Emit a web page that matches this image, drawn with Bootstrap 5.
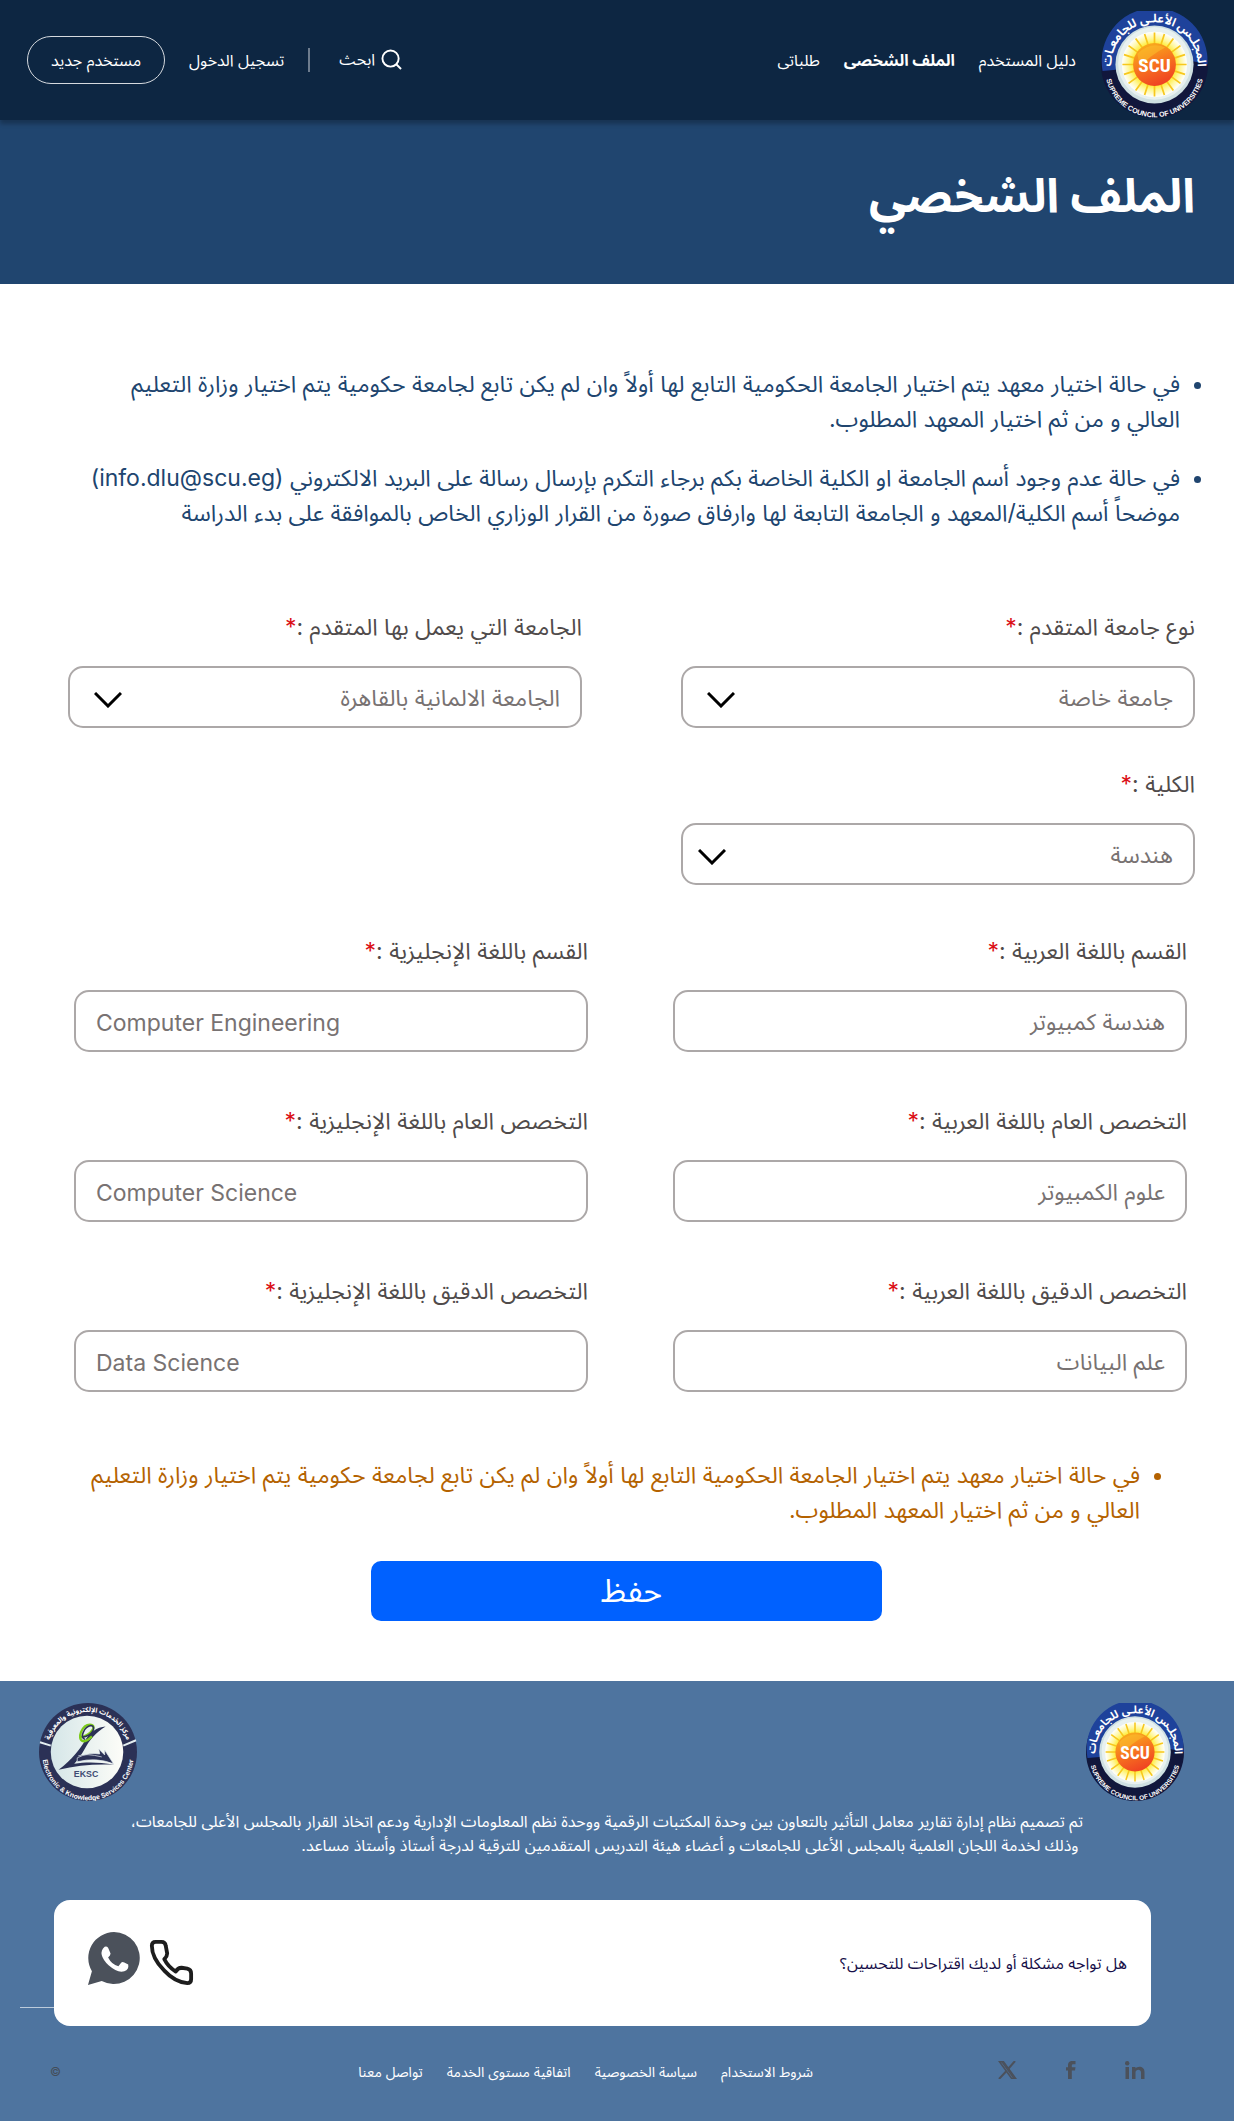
<!DOCTYPE html>
<html lang="ar" dir="rtl">
<head>
<meta charset="utf-8">
<meta name="viewport" content="width=device-width, initial-scale=1">
<title>الملف الشخصي</title>
<link href="https://cdn.jsdelivr.net/npm/bootstrap@5.3.0/dist/css/bootstrap.min.css" rel="stylesheet">
<style>
  body { font-family: Inter, "Noto Sans Arabic", "Noto Sans", "DejaVu Sans", sans-serif; font-size: 16px; line-height: 24px; color: #504b4b; }
  .site-header { background: #0d2642; min-height: 120px; padding: 0 25px 0 27px; box-shadow: 0 4px 4px rgba(0, 0, 0, .25); z-index: 2; }
  .site-header a { color: #fff; text-decoration: none; }
  .main-links { padding-right: 24px; gap: 24px; }
  .user-links { gap: 24px; }
  .find-btn { color: #fff; gap: 6px; padding: 0 6px 2px 4px; }
  .split-line { width: 2px; height: 24px; background: #6d7c8e; }
  .btn-register { border: 1px solid #d5d9de; border-radius: 24px; height: 48px; width: 138px; }
  .hero { background: #20456f; height: 164px; padding: 0 39px 14px; }
  .hero h1 { color: #fff; font-size: 47px; line-height: 64px; font-weight: 700; }
  .notes { font-size: 23px; line-height: 35px; color: #20456f; padding: 0 54px 0 0; margin: 0; }
  .notes li + li { margin-top: 24px; }
  .top-notes { padding: 83px 0 0 80px; }
  .end-notes { color: #b46200; padding: 0 94px 0 80px; margin-top: 66px; }
  .pair-a { --bs-gutter-x: 99px; --bs-gutter-y: 39px; }
  .pair-b { --bs-gutter-x: 85px; --bs-gutter-y: 52px; }
  .block-a { padding: 79px 39px 0 68px; }
  .block-b { padding: 49px 47px 0 74px; }
  .form-label { display: block; font-size: 23px; line-height: 35px; margin: 0 0 21px; color: #504b4b; }
  .req { color: #db0f16; }
  .field-box { height: 62px; border: 2px solid #aca8a8; border-radius: 15px; padding: 3px 20px 0; font-size: 23px; line-height: 35px; color: #787272; }
  select.field-box { padding: 3px 20px 0 64px; background-position: left 24px top 24px; background-size: 28px 16px; background-image: url("data:image/svg+xml,%3Csvg xmlns='http://www.w3.org/2000/svg' viewBox='0 0 28 16'%3E%3Cpath d='M1 1l13 13L27 1' fill='none' stroke='%23000' stroke-width='3'/%3E%3C/svg%3E"); }
  select.narrow-arrow { background-position: left 15px top 24px; }
  .btn-save { width: 511px; max-width: 100%; height: 60px; background: #0061ff; color: #fff; border: 0; border-radius: 10px; padding: 0 0 0 10px; font-size: 32px; line-height: 40px; }
  .save-row { padding: 33px 0 60px 371px; }
  .site-footer { background: #4e749f; color: #fff; padding-bottom: 5px; }
  .logo-row { padding: 22px 50px 0 39px; }
  .about { padding: 8px 151px 0 0; }
  .about p { margin: 0; }
  .help-wrap { margin-top: 43px; padding: 0 83px 0 54px; position: relative; }
  .help-wrap::before { content: ""; position: absolute; left: 20px; width: 60px; bottom: 18px; border-top: 1px solid #bccbdb; }
  .help-card { background: #fff; color: #170f49; border-radius: 16px; height: 126px; padding: 0 24px 0 33px; position: relative; }
  .contact-icons { padding-bottom: 10px; }
  .bottom-row { padding: 0 89px 2px 50px; height: 90px; }
  .legal { gap: 24px; font-size: 14px; margin-right: 185px; padding-top: 3px; }
  .legal a { color: #fff; text-decoration: none; }
  .social { width: 147px; }
  .copy { color: #444d58; font-size: 12px; margin-right: auto; padding-top: 3px; }
</style>
</head>
<body>
<svg width="0" height="0" class="position-absolute" aria-hidden="true">
  <defs>
    <linearGradient id="orb" x1="0.2" y1="0" x2="0.6" y2="1"><stop offset="0" stop-color="#f9b21c"/><stop offset=".5" stop-color="#f7761f"/><stop offset="1" stop-color="#ef4123"/></linearGradient>
    <radialGradient id="glow"><stop offset=".55" stop-color="#ffe600"/><stop offset=".8" stop-color="#fff79a"/><stop offset="1" stop-color="#fff"/></radialGradient>
    <linearGradient id="disc"><stop offset="0" stop-color="#d5e6e8"/><stop offset="1" stop-color="#fdfdf8"/></linearGradient>
    <path id="scuTop" d="M11 62A40.500 40.500 0 1 1 89 62"/>
    <path id="scuLow" d="M4 46A46.500 46.500 0 1 0 96 46"/>
    <path id="ekTop" d="M9 50A41 41 0 0 1 91 50"/>
    <path id="ekLow" d="M4 46A46.500 46.500 0 1 0 96 46"/>
    <symbol id="scu" viewBox="0 0 100 100">
      <circle cx="50" cy="50" r="50" fill="#11173c"/>
      <path d="M1.500 56A49.500 49.500 0 1 1 99.500 50L86 47 14 55Z" fill="#1e429b"/>
      <circle cx="50" cy="50" r="36.500" fill="#cfe0e2"/>
      <circle cx="50" cy="49" r="34" fill="#e8f1f0"/>
      <circle cx="50" cy="50" r="30.500" fill="url(#glow)"/>
      <g stroke="#f8c81c" stroke-width="1.600">
        <path id="ray" d="M50 20V80M20 50H80"/>
        <use href="#ray" transform="rotate(18 50 50)"/><use href="#ray" transform="rotate(36 50 50)"/><use href="#ray" transform="rotate(54 50 50)"/><use href="#ray" transform="rotate(72 50 50)"/>
      </g>
      <circle cx="50" cy="50" r="20" fill="url(#orb)"/>
      <path d="M34 40Q46 28 60 34Q48 40 36 52Z" fill="#fbc02d" opacity=".55"/>
      <text x="50" y="57" direction="ltr" text-anchor="middle" font-family="Liberation Sans Narrow, Roboto Condensed, Liberation Sans, sans-serif" font-size="18" font-weight="700" fill="#fff">SCU</text>
      <text direction="ltr" font-family="Liberation Sans, sans-serif" font-size="6.600" font-weight="700" fill="#fff"><textPath href="#scuLow" startOffset="50%" text-anchor="middle">SUPREME COUNCIL OF UNIVERSITIES</textPath></text>
      <text font-family="Noto Sans Arabic, DejaVu Sans" font-size="11" font-weight="700" fill="#fff" direction="rtl"><textPath href="#scuTop" startOffset="50%" text-anchor="middle">المجلـس الأعلـى للجامعـات</textPath></text>
    </symbol>
    <symbol id="eksc" viewBox="0 0 100 100">
      <circle cx="50" cy="50" r="50" fill="#2b3156"/>
      <circle cx="49" cy="50" r="37" fill="url(#disc)"/>
      <path d="M1 40L12 43.500M99 38L86 43.500" stroke="#e4eef0" stroke-width="2"/>
      <path d="M20 68C34 58 42 46 46 40C52 29 59 25 68 24C58 30 52 37 46 48C42 55 38 60 36 62C48 60 60 60 77 63C56 62 38 64 20 68Z" fill="#2b3156"/>
      <path d="M39 56Q50 50 62 52L61 47L67 53V48L76 62Q58 55 39 60ZM40 54Q48 51 64 55" fill="#2b3156" stroke="#e4eef0" stroke-width=".7"/>
      <path d="M42 35C54 33 60 22 52 22C44 22 38 37 45 39C49 39 52 36 54 34" fill="none" stroke="#7ccb1b" stroke-width="2.400"/>
      <path d="M44 35C55 33 59 24 53 23C46 24 41 36 47 37" fill="none" stroke="#2b3156" stroke-width="1.600"/>
      <text x="48" y="76" direction="ltr" text-anchor="middle" font-family="Liberation Sans, sans-serif" font-size="9" font-weight="700" fill="#3e4b73">EKSC</text>
      <text direction="ltr" font-family="Liberation Sans, sans-serif" font-size="7" font-weight="700" fill="#fff"><textPath href="#ekLow" startOffset="50%" text-anchor="middle">Electronic &amp; Knowledge Services Center</textPath></text>
      <text font-family="Noto Sans Arabic, DejaVu Sans" font-size="7" font-weight="700" fill="#fff" direction="rtl"><textPath href="#ekTop" startOffset="50%" text-anchor="middle">مركز الخدمات الإلكترونية والمعرفية</textPath></text>
    </symbol>
  </defs>
</svg>

<header class="site-header d-flex align-items-center justify-content-between position-relative">
  <nav class="d-flex align-items-center" aria-label="القائمة الرئيسية">
    <a href="#" class="pt-2" aria-label="المجلس الأعلى للجامعات"><svg class="d-block" width="109" height="107"><use href="#scu"/></svg></a>
    <div class="main-links d-flex">
      <a href="#">دليل المستخدم</a>
      <a href="#" class="fw-bold" aria-current="page">الملف الشخصى</a>
      <a href="#">طلباتى</a>
    </div>
  </nav>
  <div class="user-links d-flex align-items-center">
    <button type="button" class="find-btn btn d-flex align-items-center">
      <svg width="21" height="21" viewBox="0 0 22 22" fill="none" stroke="#fff" stroke-width="2"><circle cx="10" cy="10" r="8.500"/><path d="M16 16l5 5"/></svg>
      <span>ابحث</span>
    </button>
    <span class="split-line"></span>
    <a href="#">تسجيل الدخول</a>
    <a href="#" class="btn-register d-flex align-items-center justify-content-center">مستخدم جديد</a>
  </div>
</header>

<section class="hero d-flex align-items-center"><h1 class="m-0">الملف الشخصي</h1></section>

<main>
  <div class="top-notes">
    <ul class="notes">
      <li>في حالة اختيار معهد يتم اختيار الجامعة الحكومية التابع لها أولاً وان لم يكن تابع لجامعة حكومية يتم اختيار وزارة التعليم<br>العالي و من ثم اختيار المعهد المطلوب.</li>
      <li>في حالة عدم وجود أسم الجامعة او الكلية الخاصة بكم برجاء التكرم بإرسال رسالة على البريد الالكتروني (info.dlu@scu.eg)<br>موضحاً أسم الكلية/المعهد و الجامعة التابعة لها وارفاق صورة من القرار الوزاري الخاص بالموافقة على بدء الدراسة</li>
    </ul>
  </div>
  <form>
    <div class="block-a">
      <div class="row pair-a">
        <div class="col-6">
          <label class="form-label" for="uniType">نوع جامعة المتقدم :<span class="req">*</span></label>
          <select class="form-select field-box" id="uniType"><option>جامعة خاصة</option></select>
        </div>
        <div class="col-6">
          <label class="form-label" for="uni">الجامعة التي يعمل بها المتقدم :<span class="req">*</span></label>
          <select class="form-select field-box" id="uni"><option>الجامعة الالمانية بالقاهرة</option></select>
        </div>
        <div class="col-6">
          <label class="form-label" for="faculty">الكلية :<span class="req">*</span></label>
          <select class="form-select field-box narrow-arrow" id="faculty"><option>هندسة</option></select>
        </div>
      </div>
    </div>
    <div class="block-b">
      <div class="row pair-b">
        <div class="col-6">
          <label class="form-label" for="depAr">القسم باللغة العربية :<span class="req">*</span></label>
          <input class="form-control field-box" id="depAr" type="text" value="هندسة كمبيوتر">
        </div>
        <div class="col-6">
          <label class="form-label" for="depEn">القسم باللغة الإنجليزية :<span class="req">*</span></label>
          <input class="form-control field-box" id="depEn" type="text" dir="ltr" value="Computer Engineering">
        </div>
        <div class="col-6">
          <label class="form-label" for="majAr">التخصص العام باللغة العربية :<span class="req">*</span></label>
          <input class="form-control field-box" id="majAr" type="text" value="علوم الكمبيوتر">
        </div>
        <div class="col-6">
          <label class="form-label" for="majEn">التخصص العام باللغة الإنجليزية :<span class="req">*</span></label>
          <input class="form-control field-box" id="majEn" type="text" dir="ltr" value="Computer Science">
        </div>
        <div class="col-6">
          <label class="form-label" for="minAr">التخصص الدقيق باللغة العربية :<span class="req">*</span></label>
          <input class="form-control field-box" id="minAr" type="text" value="علم البيانات">
        </div>
        <div class="col-6">
          <label class="form-label" for="minEn">التخصص الدقيق باللغة الإنجليزية :<span class="req">*</span></label>
          <input class="form-control field-box" id="minEn" type="text" dir="ltr" value="Data Science">
        </div>
      </div>
    </div>
    <ul class="notes end-notes">
      <li>في حالة اختيار معهد يتم اختيار الجامعة الحكومية التابع لها أولاً وان لم يكن تابع لجامعة حكومية يتم اختيار وزارة التعليم<br>العالي و من ثم اختيار المعهد المطلوب.</li>
    </ul>
    <div class="save-row d-flex justify-content-end">
      <button class="btn-save" type="submit">حفظ</button>
    </div>
  </form>
</main>

<footer class="site-footer">
  <div class="logo-row d-flex justify-content-between">
    <svg width="98" height="98" role="img" aria-label="SCU"><use href="#scu"/></svg>
    <svg width="98" height="98" role="img" aria-label="EKSC"><use href="#eksc"/></svg>
  </div>
  <div class="about">
    <p>تم تصميم نظام إدارة تقارير معامل التأثير بالتعاون بين وحدة المكتبات الرقمية ووحدة نظم المعلومات الإدارية ودعم اتخاذ القرار بالمجلس الأعلى للجامعات،</p>
    <p>&nbsp;وذلك لخدمة اللجان العلمية بالمجلس الأعلى للجامعات و أعضاء هيئة التدريس المتقدمين للترقية لدرجة أستاذ وأستاذ مساعد.</p>
  </div>
  <div class="help-wrap">
    <div class="help-card d-flex align-items-center justify-content-between">
      <span>هل تواجه مشكلة أو لديك اقتراحات للتحسين؟</span>
      <div class="contact-icons d-flex align-items-center gap-2">
        <a href="#" class="pt-2" aria-label="اتصال"><svg class="d-block" width="46" height="46" viewBox="0 0 48 48" fill="none" stroke="#1d1d1d" stroke-width="4" stroke-linejoin="round"><path d="M4 7Q4 3 8 3H14Q18 3 18.500 7L20 15Q20 18 17 21Q21 29 29 34Q31 30 35 30L41 31Q45 32 45 36V42Q45 46 41 46Q28 45 17 33Q4 20 4 7Z"/></svg></a>
        <a href="#" aria-label="WhatsApp"><svg class="d-block" width="53" height="53" viewBox="0 0 54 54"><path d="M27.500 0A26.500 26.500 0 1 1 15 50L1 54L5 40A26.500 26.500 0 0 1 27.500 0Z" fill="#4b515b"/><path d="M18 15Q20 14 21.500 16L24 22Q24 24 21.500 26Q25 33 32 35L35 31Q36 30 38 31L42 33Q43 38 38 40Q31 42 22 34Q10 22 18 15Z" fill="#fff"/></svg></a>
      </div>
    </div>
  </div>
  <div class="bottom-row d-flex align-items-center">
    <div class="social d-flex align-items-center justify-content-between">
      <a href="#" aria-label="LinkedIn"><svg class="d-block" width="20" height="18" viewBox="0 0 20 18" fill="#4b515b"><circle cx="2.200" cy="2.200" r="2.200"/><path d="M.5 6h3.500v12H.5zM7 6h3.500v1.600C12 5 19.500 4.500 19.500 11v7H16v-6.500C16 7.500 10.500 8 10.500 11.500V18H7z"/></svg></a>
      <a href="#" aria-label="Facebook"><svg class="d-block" width="10" height="18" viewBox="0 0 10 18" fill="#4b515b"><path d="M2 18V9.500H0V6.200H2V4.500C2 1 4 0 6 0H9.500V3.200H7.500C6 3.200 5.800 3.800 5.800 5V6.200H9.500L9 9.500H5.800V18Z"/></svg></a>
      <a href="#" aria-label="X"><svg class="d-block" width="19" height="18" viewBox="0 0 19 18" fill="none" stroke="#4b515b"><path d="M1.500 .8H5.500L17.500 17.200H13.500Z" stroke-width="1.600"/><path d="M4 .8L16 17.200" stroke-width="1.500"/><path d="M17 0L10.500 7.500M8.500 10L1 18" stroke-width="2"/></svg></a>
    </div>
    <div class="legal d-flex">
      <a href="#">شروط الاستخدام</a>
      <a href="#">سياسة الخصوصية</a>
      <a href="#">اتفاقية مستوى الخدمة</a>
      <a href="#">تواصل معنا</a>
    </div>
    <div class="copy">©</div>
  </div>
</footer>
<script src="https://cdn.jsdelivr.net/npm/bootstrap@5.3.0/dist/js/bootstrap.bundle.min.js"></script>
</body>
</html>
